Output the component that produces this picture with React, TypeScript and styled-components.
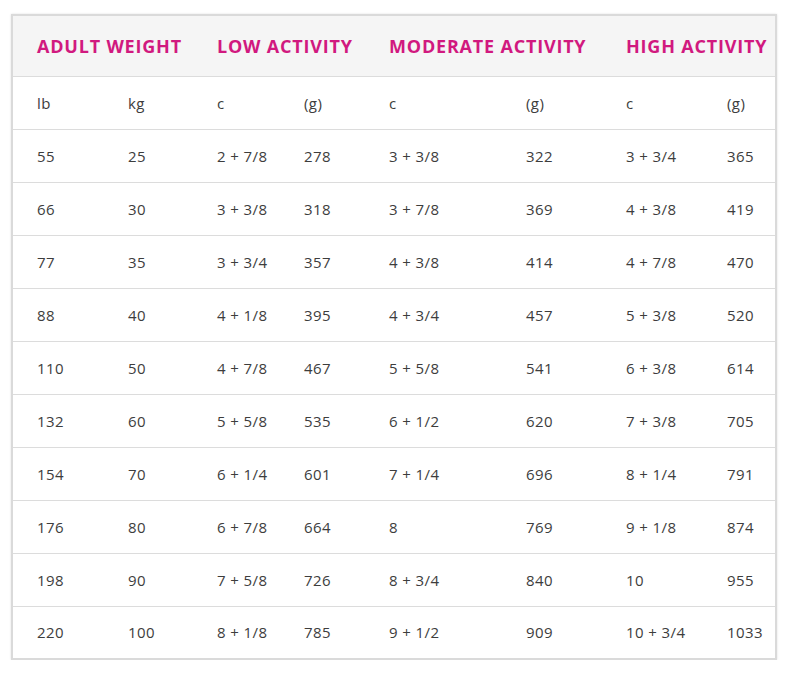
import React from "react";
import styled, { createGlobalStyle } from "styled-components";

const Global = createGlobalStyle`
  html, body { margin: 0; padding: 0; background: #ffffff; }
  body { font-family: "Open Sans", "Liberation Sans", sans-serif; }
`;

const Page = styled.div`
  padding: 14px 0 0 11px;
`;

const Table = styled.table`
  width: 766px;
  border-collapse: collapse;
  table-layout: fixed;
  border: 2px solid #dadada;
  box-shadow: 0 0 2px rgba(0, 0, 0, 0.12);
`;

const HeadRow = styled.tr`
  background: #f5f5f5;
  height: 61px;
  border-bottom: 1px solid #dcdcdc;
`;

const HeadCell = styled.th`
  text-align: left;
  padding: 0 0 0 24px;
  font-family: "Open Sans", sans-serif;
  font-weight: 700;
  font-size: 18px;
  letter-spacing: 0.8px;
  color: #d1197f;
  white-space: nowrap;
  vertical-align: middle;
`;

const Row = styled.tr`
  height: 53px;
  border-bottom: 1px solid #dcdcdc;
  &:last-child { border-bottom: none; }
`;

const Cell = styled.td`
  padding: 0 0 0 24px;
  font-family: "Open Sans", sans-serif;
  font-size: 15px;
  font-weight: 400;
  letter-spacing: 0.4px;
  color: #3d3d3d;
  white-space: nowrap;
  vertical-align: middle;
`;

const widths = [92, 89, 87, 85, 137, 100, 101, 73];

const data: string[][] = [
  ["lb", "kg", "c", "(g)", "c", "(g)", "c", "(g)"],
  ["55", "25", "2 + 7/8", "278", "3 + 3/8", "322", "3 + 3/4", "365"],
  ["66", "30", "3 + 3/8", "318", "3 + 7/8", "369", "4 + 3/8", "419"],
  ["77", "35", "3 + 3/4", "357", "4 + 3/8", "414", "4 + 7/8", "470"],
  ["88", "40", "4 + 1/8", "395", "4 + 3/4", "457", "5 + 3/8", "520"],
  ["110", "50", "4 + 7/8", "467", "5 + 5/8", "541", "6 + 3/8", "614"],
  ["132", "60", "5 + 5/8", "535", "6 + 1/2", "620", "7 + 3/8", "705"],
  ["154", "70", "6 + 1/4", "601", "7 + 1/4", "696", "8 + 1/4", "791"],
  ["176", "80", "6 + 7/8", "664", "8", "769", "9 + 1/8", "874"],
  ["198", "90", "7 + 5/8", "726", "8 + 3/4", "840", "10", "955"],
  ["220", "100", "8 + 1/8", "785", "9 + 1/2", "909", "10 + 3/4", "1033"],
];

const headers = ["ADULT WEIGHT", "LOW ACTIVITY", "MODERATE ACTIVITY", "HIGH ACTIVITY"];

export default function App() {
  return (
    <>
      <Global />
      <Page>
        <Table>
          <colgroup>
            {widths.map((w, i) => (
              <col key={i} style={{ width: w }} />
            ))}
          </colgroup>
          <thead>
            <HeadRow>
              {headers.map((h) => (
                <HeadCell key={h} colSpan={2}>
                  {h}
                </HeadCell>
              ))}
            </HeadRow>
          </thead>
          <tbody>
            {data.map((r, i) => (
              <Row key={i}>
                {r.map((c, j) => (
                  <Cell key={j}>{c}</Cell>
                ))}
              </Row>
            ))}
          </tbody>
        </Table>
      </Page>
    </>
  );
}
